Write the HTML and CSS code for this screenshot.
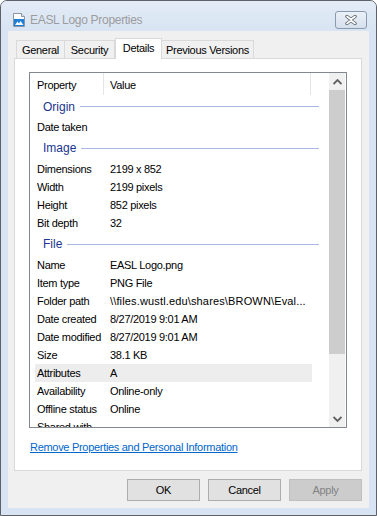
FILE: index.html
```html
<!DOCTYPE html>
<html lang="en">
<head>
  <meta charset="UTF-8" />
  <title>EASL Logo Properties</title>
  <link rel="stylesheet" href="styles.css">
</head>
<body>

  <div class="window">
    <div class="titlebar">
      <svg class="app-icon" width="16" height="16" viewBox="0 0 16 16">
        <path d="M2.5 1.5h8l3 3v10h-11z" fill="#fff" stroke="#8a96a6"/>
        <path d="M10.5 1.5v3h3" fill="#e8eef4" stroke="#8a96a6"/>
        <rect x="3" y="7" width="10" height="7" fill="#1f7fd6"/>
        <path d="M4 13l2.5-3.5 1.5 2 1.5-2.5 3 4z" fill="#fff"/>
      </svg>
      <span class="title">EASL Logo Properties</span>
      <div class="close-btn">
        <svg width="14" height="10" viewBox="0 0 14 10">
          <path d="M3 1.5l4 3 4-3M3 8.5l4-3 4 3" fill="none" stroke="#5f6770" stroke-width="3.4" stroke-linecap="round"/>
          <path d="M3 1.5l4 3 4-3M3 8.5l4-3 4 3" fill="none" stroke="#fff" stroke-width="1.6" stroke-linecap="round"/>
        </svg>
      </div>
    </div>

    <div class="client">
      <div class="tabs">
        <div class="tab tab-general">General</div>
        <div class="tab tab-security">Security</div>
        <div class="tab tab-details selected">Details</div>
        <div class="tab tab-versions">Previous Versions</div>
      </div>

      <div class="panel">
        <div class="listbox">
          <div class="rows">
            <div class="list-header">
              <div class="hcell hcell-prop">Property</div>
              <div class="hcell hcell-value">Value</div>
            </div>

            <div class="group first"><span>Origin</span><i></i></div>
            <div class="item"><span>Date taken</span><span></span></div>

            <div class="group"><span>Image</span><i></i></div>
            <div class="item"><span>Dimensions</span><span>2199 x 852</span></div>
            <div class="item"><span>Width</span><span>2199 pixels</span></div>
            <div class="item"><span>Height</span><span>852 pixels</span></div>
            <div class="item"><span>Bit depth</span><span>32</span></div>

            <div class="group"><span>File</span><i></i></div>
            <div class="item"><span>Name</span><span>EASL Logo.png</span></div>
            <div class="item"><span>Item type</span><span>PNG File</span></div>
            <div class="item"><span>Folder path</span><span class="path">\\files.wustl.edu\shares\BROWN\Eval...</span></div>
            <div class="item"><span>Date created</span><span>8/27/2019 9:01 AM</span></div>
            <div class="item"><span>Date modified</span><span>8/27/2019 9:01 AM</span></div>
            <div class="item"><span>Size</span><span>38.1 KB</span></div>
            <div class="item hot"><span>Attributes</span><span>A</span></div>
            <div class="item"><span>Availability</span><span>Online-only</span></div>
            <div class="item"><span>Offline status</span><span>Online</span></div>
            <div class="item"><span>Shared with</span><span></span></div>
          </div>

          <div class="scrollbar">
            <div class="sb-arrow">
              <svg width="9" height="6" viewBox="0 0 9 6"><path d="M0.5 5L4.5 1l4 4" fill="none" stroke="#606060" stroke-width="1.8"/></svg>
            </div>
            <div class="sb-thumb"></div>
            <div class="sb-track"></div>
            <div class="sb-arrow">
              <svg width="9" height="6" viewBox="0 0 9 6"><path d="M0.5 1L4.5 5l4-4" fill="none" stroke="#606060" stroke-width="1.8"/></svg>
            </div>
          </div>
        </div>

        <a class="remove-link" href="#">Remove Properties and Personal Information</a>
      </div>

      <div class="buttons">
        <div class="btn">OK</div>
        <div class="btn">Cancel</div>
        <div class="btn disabled">Apply</div>
      </div>
    </div>
  </div>

</body>
</html>
```

FILE: styles.css
```css
* {
  margin: 0;
  padding: 0;
  box-sizing: border-box;
}

body {
  width: 377px;
  height: 516px;
  background: #fff;
  font-family: 'Liberation Sans', Arial, sans-serif;
  font-size: 11px;
  letter-spacing: -0.3px;
  color: #000;
  overflow: hidden;
}

.window {
  width: 377px;
  height: 516px;
  border: 1px solid #5e6268;
  border-radius: 7px 7px 0 0;
  background: #d8e4f3;
  display: flex;
  flex-direction: column;
}

/* title bar */
.titlebar {
  height: 30px;
  flex-shrink: 0;
  display: flex;
  align-items: center;
  padding: 0 9px 0 10px;
  border-radius: 6px 6px 0 0;
  background: linear-gradient(#e3ebf6, #d8e4f3);
}

.app-icon {
  margin-top: 7px;
  flex-shrink: 0;
}

.title {
  margin-left: 3px;
  margin-top: 8px;
  font-size: 12px;
  letter-spacing: -0.3px;
  color: #9c9c9c;
  flex: 1;
}

.close-btn {
  width: 32px;
  height: 18px;
  margin-top: 8px;
  border: 1px solid #8b99ad;
  border-radius: 3px;
  background: linear-gradient(#eaf0f7, #d6e0ed);
  display: flex;
  align-items: center;
  justify-content: center;
}

/* client area */
.client {
  flex: 1;
  margin: 0 7px 7px 7px;
  background: #f0f0f0;
  display: flex;
  flex-direction: column;
}

.tabs {
  display: flex;
  align-items: flex-end;
  height: 21px;
  margin: 7px 0 -1px 8px;
  position: relative;
  z-index: 1;
}

.tab {
  height: 18px;
  margin-bottom: 1px;
  background: #f0f0f0;
  border: 1px solid #d9d9d9;
  border-bottom: none;
  text-align: center;
  line-height: 18px;
}

.tab-general { width: 49px; }
.tab-security { width: 50px; border-left: none; }
.tab-versions { width: 92px; border-left: none; }

.tab.selected {
  width: 47px;
  height: 21px;
  margin-bottom: 0;
  background: #fff;
  line-height: 18px;
}

.panel {
  height: 413px;
  margin: 0 7px 0 6px;
  padding: 13px 14px 0 14px;
  background: #fff;
  border: 1px solid #d9d9d9;
}

/* details list */
.listbox {
  height: 356px;
  border: 1px solid #828790;
  display: flex;
  padding-right: 1px;
}

.rows {
  flex: 1;
  overflow: hidden;
}

.list-header {
  display: flex;
  height: 22px;
}

.hcell {
  line-height: 22px;
  border-right: 1px solid #e5e5e5;
  padding-top: 1px;
}

.hcell-prop {
  width: 74px;
  padding-left: 7px;
}

.hcell-value {
  width: 207px;
  padding-left: 6px;
}

.group {
  height: 24px;
  display: flex;
  align-items: center;
  padding-left: 13px;
  padding-right: 10px;
  color: #1a3590;
  font-size: 12px;
  letter-spacing: 0;
}

.group.first {
  height: 23px;
}

.group i {
  flex: 1;
  height: 1px;
  margin-left: 5px;
  background: #a9b8e2;
}

.item {
  height: 18px;
  display: grid;
  grid-template-columns: 73px 1fr;
  align-items: center;
  margin: 0 17px 0 5px;
  padding-left: 2px;
  white-space: nowrap;
}

.item .path {
  letter-spacing: 0.15px;
}

.item.hot {
  background: #ededed;
}

/* scroll bar */
.scrollbar {
  width: 16px;
  display: flex;
  flex-direction: column;
  background: #f0f0f0;
}

.sb-arrow {
  height: 17px;
  display: flex;
  align-items: center;
  justify-content: center;
}

.sb-thumb {
  height: 264px;
  background: #cdcdcd;
}

.sb-track {
  flex: 1;
}

.remove-link {
  display: block;
  width: max-content;
  margin-top: 12px;
  margin-left: 1px;
  color: #0066cc;
  text-decoration: underline;
  line-height: 14px;
}

/* dialog buttons */
.buttons {
  display: flex;
  justify-content: flex-end;
  gap: 8px;
  margin: 8px 7px 0 0;
}

.btn {
  width: 73px;
  height: 22px;
  border: 1px solid #adadad;
  background: #e1e1e1;
  text-align: center;
  line-height: 20px;
}

.btn.disabled {
  background: #cccccc;
  border-color: #bfbfbf;
  color: #838383;
}
```
